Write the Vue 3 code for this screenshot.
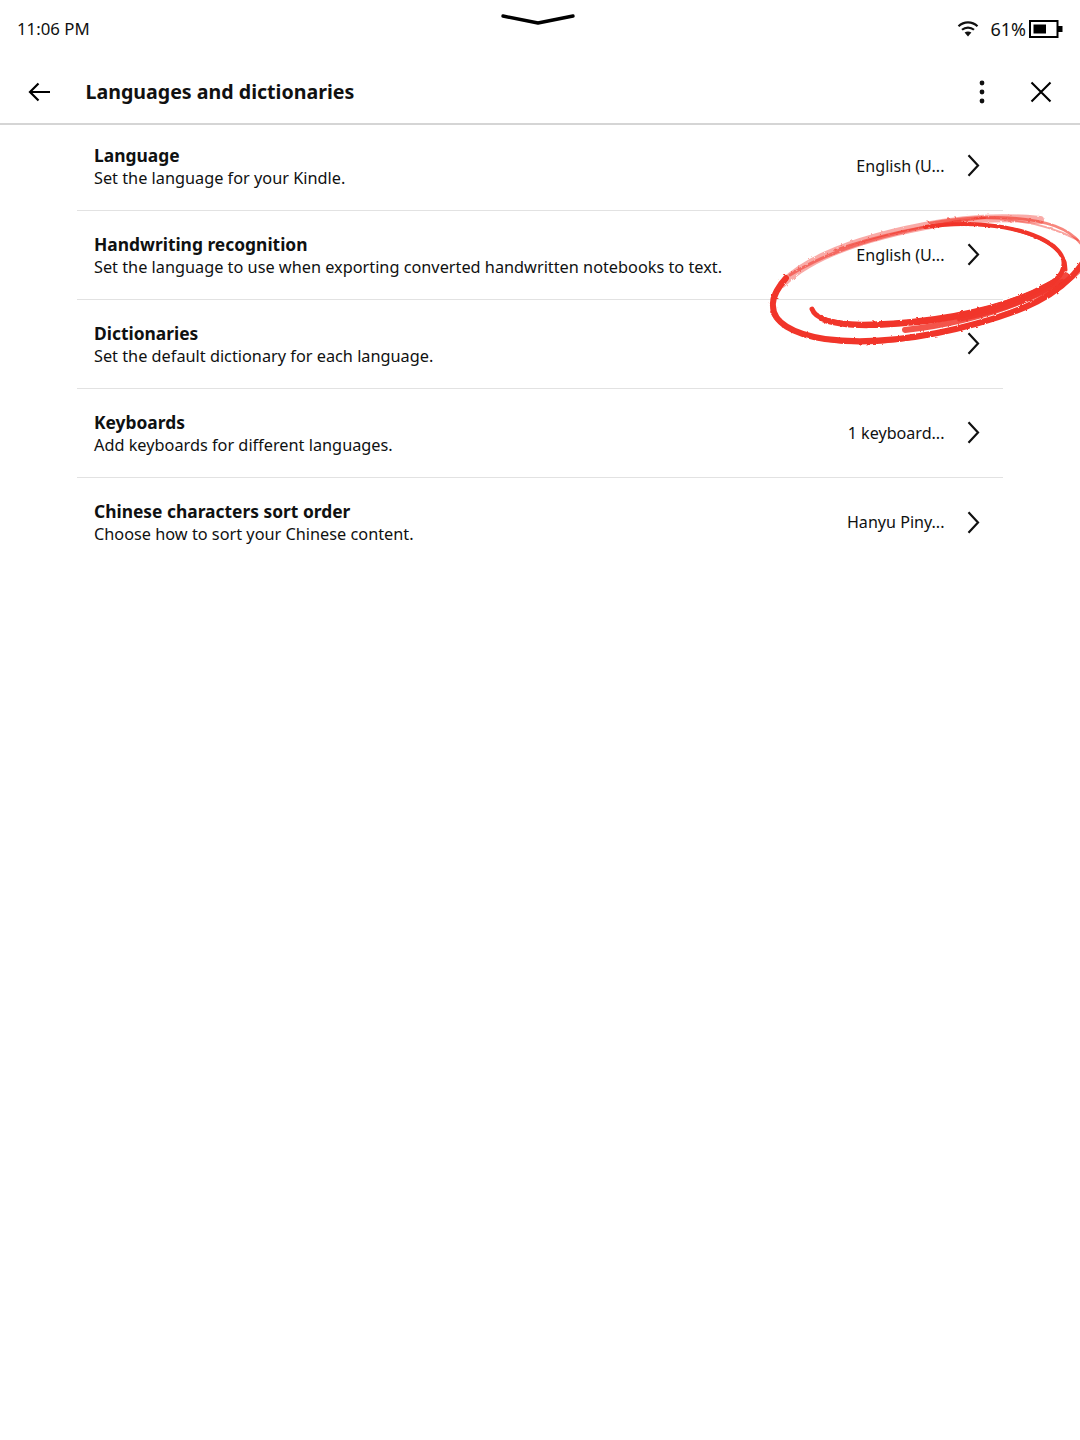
<script setup>
const rows = [
  { title: 'Language', sub: 'Set the language for your Kindle.', value: 'English (U...' },
  { title: 'Handwriting recognition', sub: 'Set the language to use when exporting converted handwritten notebooks to text.', value: 'English (U...' },
  { title: 'Dictionaries', sub: 'Set the default dictionary for each language.', value: '' },
  { title: 'Keyboards', sub: 'Add keyboards for different languages.', value: '1 keyboard...' },
  { title: 'Chinese characters sort order', sub: 'Choose how to sort your Chinese content.', value: 'Hanyu Piny...' }
]
</script>

<template>
  <div class="page">
    <div class="status">
      <span class="time">11:06 PM</span>
      <svg class="handle" width="74" height="12" viewBox="0 0 74 12">
        <path d="M2 3 L37 10 L72 3" fill="none" stroke="#000" stroke-width="3.4" stroke-linecap="round" stroke-linejoin="round" />
      </svg>
      <div class="status-right">
        <svg class="wifi" width="22" height="17" viewBox="0 0 22 17">
          <path d="M1.5 6.2 C7 1 15 1 20.5 6.2" fill="none" stroke="#111" stroke-width="2.2" />
          <path d="M5 9.8 C8.4 6.8 13.6 6.8 17 9.8" fill="none" stroke="#111" stroke-width="2.2" />
          <path d="M7.6 12.6 L11 16.4 L14.4 12.6 C12.4 11 9.6 11 7.6 12.6 Z" fill="#111" />
        </svg>
        <span class="pct">61%</span>
        <svg class="battery" width="34" height="18" viewBox="0 0 34 18">
          <rect x="1" y="1" width="27.5" height="16" fill="none" stroke="#000" stroke-width="2" />
          <rect x="4.5" y="4.5" width="12.5" height="9" fill="#000" />
          <rect x="29" y="6" width="4.5" height="6" fill="#000" />
        </svg>
      </div>
    </div>

    <header class="header">
      <svg class="back" width="24" height="20" viewBox="0 0 24 20">
        <path d="M22 10 H2 M10.5 1.5 L2 10 L10.5 18.5" fill="none" stroke="#000" stroke-width="2.2" />
      </svg>
      <h1 class="heading">Languages and dictionaries</h1>
      <svg class="dots" width="6" height="24" viewBox="0 0 6 24">
        <circle cx="3" cy="3" r="2.4" fill="#111" />
        <circle cx="3" cy="12" r="2.4" fill="#111" />
        <circle cx="3" cy="21" r="2.4" fill="#111" />
      </svg>
      <svg class="close" width="22" height="22" viewBox="0 0 22 22">
        <path d="M1.5 1.5 L20.5 20.5 M20.5 1.5 L1.5 20.5" fill="none" stroke="#000" stroke-width="2.1" />
      </svg>
    </header>

    <ul class="list">
      <li v-for="row in rows" :key="row.title" class="row">
        <div class="text">
          <div class="title">{{ row.title }}</div>
          <div class="sub">{{ row.sub }}</div>
        </div>
        <span class="value">{{ row.value }}</span>
        <svg class="chev" width="13" height="23" viewBox="0 0 13 23">
          <path d="M1.5 1.2 L11 11.5 L1.5 21.8" fill="none" stroke="#111" stroke-width="2.2" />
        </svg>
      </li>
    </ul>

    <svg class="scribble" width="1080" height="1440" viewBox="0 0 1080 1440">
      <defs>
        <filter id="rough" x="700" y="190" width="400" height="180" filterUnits="userSpaceOnUse">
          <feTurbulence type="fractalNoise" baseFrequency="0.3" numOctaves="2" seed="4" result="n" />
          <feDisplacementMap in="SourceGraphic" in2="n" scale="2.5" />
        </filter>
      </defs>
      <g fill="none" stroke="#f1352a" stroke-linecap="round" stroke-linejoin="round" filter="url(#rough)">
        <!-- tail and inner sweep -->
        <path d="M812 309 C816 321 838 325 872 324 C925 322 985 313 1030 294 C1052 285 1065 276 1064 262" stroke-width="5" />
        <path d="M822 319 C845 328 885 326 935 320 C980 314 1020 301 1052 283" stroke-width="6" />
        <path d="M1064 262 C1060 243 1030 229 985 225 C965 223 945 224 925 227" stroke-width="4" />
        <path d="M1066 270 C1066 252 1046 238 1012 229" stroke-width="3" />
        <!-- outer loop -->
        <path d="M786 278 C776 290 772 298 773 306 C773 322 792 334 825 339 C870 345 925 338 975 324 C1020 312 1060 296 1082 264" stroke-width="6" />
        <path d="M772 312 C780 328 805 338 845 342 C880 344 925 337 965 326" stroke-width="4" opacity=".7" />
        <path d="M905 330 C950 325 1005 313 1062 282" stroke-width="6" opacity=".85" />
        <path d="M960 318 C1005 309 1040 295 1066 276" stroke-width="7" opacity=".9" />
        <path d="M1000 316 C1035 305 1060 290 1082 268" stroke-width="5" opacity=".6" />
        <!-- dry upper strokes -->
        <path d="M782 284 C810 256 862 238 925 226 C960 219 1000 216 1040 220" stroke-width="8" opacity=".42" />
        <path d="M790 275 C830 250 890 232 960 221" stroke-width="3" opacity=".55" />
        <path d="M835 250 C880 234 930 224 985 218" stroke-width="2" opacity=".6" />
        <path d="M930 223 C975 215 1025 215 1055 226 C1066 230 1076 237 1082 245" stroke-width="2.6" opacity=".6" />
        <path d="M975 218 C1012 218 1048 224 1078 240" stroke-width="2" opacity=".45" />
      </g>
    </svg>
  </div>
</template>

<style scoped>
.page {
  position: relative;
  width: 1080px;
  height: 1440px;
  overflow: hidden;
  background: #fff;
  color: #0f1111;
  font-family: "Noto Sans", "Open Sans", sans-serif;
}
.status {
  position: relative;
  display: flex;
  align-items: center;
  justify-content: space-between;
  height: 60px;
  padding: 0 17px 3px;
  box-sizing: border-box;
}
.time { font-size: 16.8px; }
.handle {
  position: absolute;
  left: 501px;
  top: 13px;
}
.status-right {
  display: flex;
  align-items: center;
}
.wifi { margin-right: 11px; }
.pct { font-size: 18px; margin-right: 3px; }
.header {
  position: relative;
  z-index: 1;
  display: flex;
  align-items: center;
  height: 63px;
  padding: 0 28px;
  border-bottom: 2px solid #d5d5d5;
}
.back { flex: none; }
.heading {
  flex: 1;
  margin: 0 0 0 33.5px;
  font-size: 19.6px;
  font-weight: 700;
  color: #111;
}
.dots { margin-right: 45px; }
.list {
  list-style: none;
  margin: -3px 77px 0;
  padding: 0;
}
.row {
  display: flex;
  align-items: center;
  height: 89px;
  box-sizing: border-box;
  padding: 0 23.5px 1px 17px;
  border-bottom: 1px solid #e2e2e2;
}
.row:last-child { border-bottom: none; }
.text { flex: 1; }
.title {
  font-size: 17.4px;
  font-weight: 700;
  line-height: 24px;
}
.sub {
  font-size: 16.3px;
  line-height: 22px;
}
.value {
  font-size: 16.1px;
  margin-right: 22px;
}
.chev { flex: none; }
.scribble {
  position: absolute;
  left: 0;
  top: 0;
  z-index: 2;
  pointer-events: none;
}
</style>
